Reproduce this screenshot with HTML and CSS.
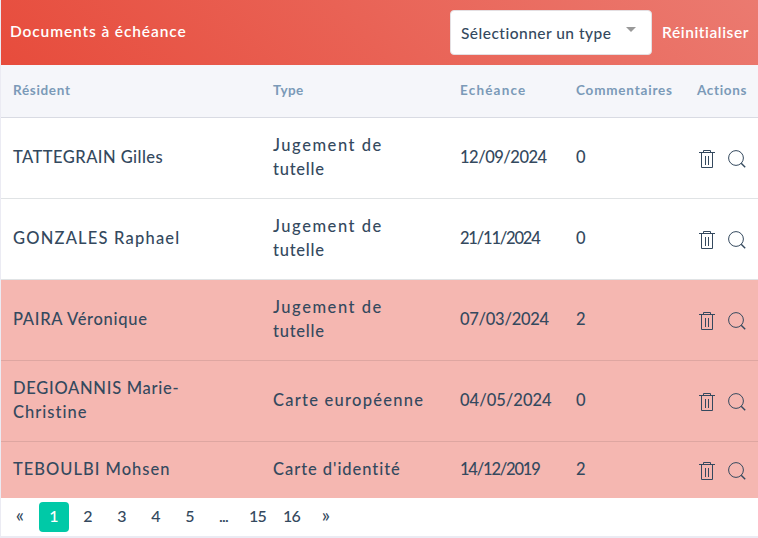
FILE: index.html
```html
<!DOCTYPE html>
<html lang="fr">
<head>
<meta charset="utf-8">
<title>Documents à échéance</title>
<link rel="stylesheet" href="styles.css">
</head>
<body>
<svg class="sprite" aria-hidden="true">
<symbol id="trash" viewBox="0 0 16 18"><path d="M0 2.5h16M4.5 2.5v-2h7v2M2.5 2.5v15h11v-15M6.5 6v9M9.5 6v9"/></symbol>
<symbol id="search" viewBox="0 0 18 18"><circle cx="8" cy="8" r="7.4"/><path d="M13.2 13.2l4 4" stroke-width="1.4"/></symbol>
</svg>
<section class="card">
<header class="bar"><h1><span class="title">Documents à échéance</span></h1><div class="select"><span class="choice">Sélectionner un type</span><i class="caret"></i></div><a class="reset">Réinitialiser</a></header>
<div class="row head"><span><b class="h-res">Résident</b></span><span><b class="h-type">Type</b></span><span><b class="h-date">Echéance</b></span><span><b class="h-com">Commentaires</b></span><span><b class="h-act">Actions</b></span></div>
<div class="row"><span class="n1">TATTEGRAIN Gilles</span><span class="jug">Jugement de<br><span class="tut">tutelle</span></span><span class="d1">12/09/2024</span><span>0</span><span class="actions"><svg class="trash"><use href="#trash"/></svg><svg class="search"><use href="#search"/></svg></span></div>
<div class="row"><span class="n2">GONZALES Raphael</span><span class="jug">Jugement de<br><span class="tut">tutelle</span></span><span class="d2">21/11/2024</span><span>0</span><span class="actions"><svg class="trash"><use href="#trash"/></svg><svg class="search"><use href="#search"/></svg></span></div>
<div class="row late"><span class="n3">PAIRA Véronique</span><span class="jug">Jugement de<br><span class="tut">tutelle</span></span><span class="d3">07/03/2024</span><span>2</span><span class="actions"><svg class="trash"><use href="#trash"/></svg><svg class="search"><use href="#search"/></svg></span></div>
<div class="row late"><span class="n4">DEGIOANNIS Marie-<br><span class="chr">Christine</span></span><span class="eur">Carte européenne</span><span class="d4">04/05/2024</span><span>0</span><span class="actions"><svg class="trash"><use href="#trash"/></svg><svg class="search"><use href="#search"/></svg></span></div>
<div class="row late last"><span class="n5">TEBOULBI Mohsen</span><span class="ide">Carte d'identité</span><span class="d5">14/12/2019</span><span>2</span><span class="actions"><svg class="trash"><use href="#trash"/></svg><svg class="search"><use href="#search"/></svg></span></div>
<nav class="pages"><a class="step">«</a><a class="current">1</a><a>2</a><a>3</a><a>4</a><a>5</a><a>...</a><a>15</a><a>16</a><a class="step">»</a></nav>
</section>
</body>
</html>
```
FILE: styles.css
```css
* { box-sizing: border-box; }
body { margin: 0; height: 538px; overflow: hidden; background: #ebebf3; color: #34495e; font: 500 16.5px/24px Lato, "Liberation Sans", sans-serif; font-variant-ligatures: none; }
.sprite { display: none; }
.card { margin-left: 1px; height: 536px; background: #fff; }
.bar { display: flex; align-items: center; height: 65px; padding: 0 9px 0 9px; background: linear-gradient(45deg, #e74c3c, #eb7a70); color: #fff; }
h1 { flex: 1; margin: 0; padding-bottom: 3px; font: 600 15.5px/24px Lato, sans-serif; white-space: nowrap; }
.title { letter-spacing: .88px; }
.select { display: flex; align-items: center; justify-content: space-between; width: 202px; height: 45px; padding: 0 15px 0 10px; margin-right: 10px; background: #fff; border: 1px solid #e4dfe2; border-radius: 4px; color: #34495e; font-size: 15.5px; white-space: nowrap; }
.choice { letter-spacing: .48px; }
.caret { border: 5px solid transparent; border-top-color: #999; border-bottom: 0; margin-bottom: 6px; }
.reset { width: 87px; font-size: 15.5px; font-weight: 600; letter-spacing: .58px; white-space: nowrap; padding-bottom: 1px; }
.row { display: grid; grid-template-columns: 260px 187px 116px 121px 1fr; align-items: center; height: 81px; padding: 0 9px 2px 12px; border-bottom: 1px solid #e0e3e5; white-space: nowrap; }
.head { height: 53px; background: #f5f6fa; border-color: #d9dbe3; color: #7b9ab8; font-size: 13.5px; padding-bottom: 2px; }
.h-res { letter-spacing: .68px; }
.h-type { letter-spacing: .45px; }
.h-date { letter-spacing: 1.2px; }
.h-com { letter-spacing: .8px; }
.h-act { letter-spacing: .65px; }
.n1 { letter-spacing: .45px; }
.n2 { letter-spacing: 1.2px; }
.n3 { letter-spacing: .7px; }
.n4 { letter-spacing: .72px; }
.chr { letter-spacing: 1px; }
.n5 { letter-spacing: 1px; }
.jug { letter-spacing: 1.55px; }
.tut { letter-spacing: .75px; }
.eur { letter-spacing: 1.25px; }
.ide { letter-spacing: .95px; }
.d1 { letter-spacing: -.5px; }
.d2, .d5 { letter-spacing: -1.2px; }
.d3 { letter-spacing: -.28px; }
.d4 { letter-spacing: 0; }
.late { background: #f5b7b1; border-color: #dea6a1; }
.last { height: 56px; padding-bottom: 2px; border-bottom: 0; }
.actions { display: flex; padding: 4px 0 0 2px; }
.last .actions { padding-top: 3px; }
.actions svg { fill: none; stroke: #34495e; stroke-width: 1; }
.trash { width: 16px; height: 18px; margin-right: 13px; }
.search { width: 18px; height: 18px; }
.pages { display: flex; gap: 4px; padding: 4px 0 0 4px; font-size: 16px; line-height: 27px; text-align: center; }
.pages a { width: 30px; height: 30px; padding-right: 1px; letter-spacing: -.8px; }
.pages .step { font-size: 19px; line-height: 25px; }
.pages .current { background: #00c9a7; color: #fff; border-radius: 4px; }
```
